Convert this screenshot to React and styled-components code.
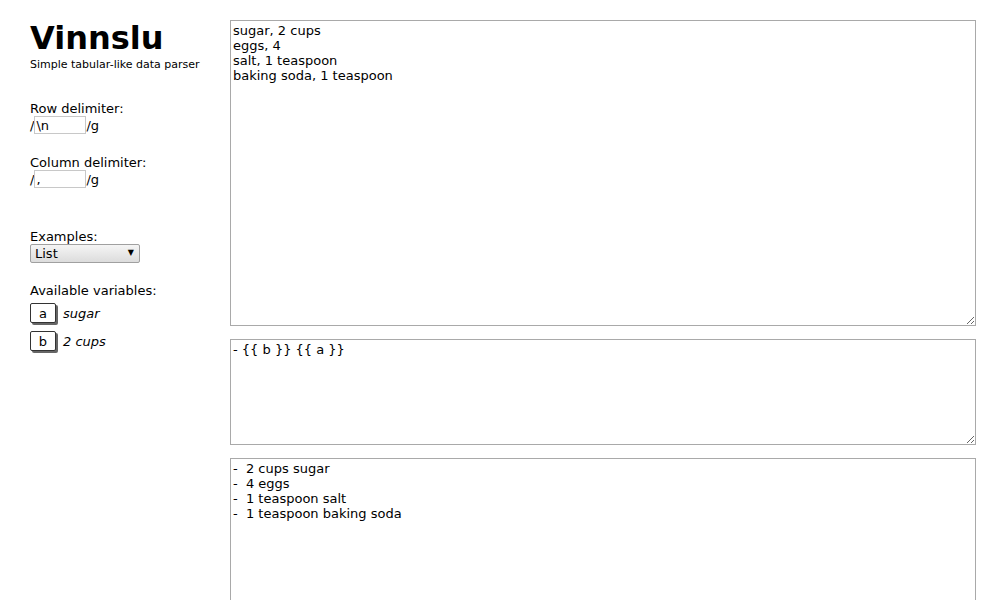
import React, { useState } from "react";
import styled, { createGlobalStyle } from "styled-components";

const GlobalStyle = createGlobalStyle`
  body {
    margin: 0;
    background: #fff;
    color: #000;
    font-family: "DejaVu Sans", Verdana, sans-serif;
    font-size: 13px;
  }
`;

const Page = styled.div`
  display: flex;
  align-items: flex-start;
  padding: 20px 24px 0 30px;
`;

const Sidebar = styled.div`
  width: 200px;
  flex-shrink: 0;
`;

const Title = styled.h1`
  margin: 0;
  font-size: 32px;
  font-weight: bold;
  line-height: 37px;
`;

const Subtitle = styled.div`
  margin-top: 1px;
  font-size: 11px;
  line-height: 13px;
`;

const Field = styled.div`
  margin-top: ${(p) => p.gap}px;
`;

const Label = styled.div`
  line-height: 15px;
`;

const RegexRow = styled.div`
  display: flex;
  align-items: center;
  height: 18px;
  line-height: 15px;
`;

const RegexInput = styled.input`
  width: 52px;
  height: 18px;
  box-sizing: border-box;
  margin: 0;
  padding: 0 1px;
  border: 1px solid #c8c8c8;
  font-family: "DejaVu Sans", sans-serif;
  font-size: 13px;
  outline: none;
`;

const SelectWrap = styled.div`
  position: relative;
  width: 110px;
  height: 19px;
`;

const Select = styled.select`
  appearance: none;
  width: 110px;
  height: 19px;
  box-sizing: border-box;
  margin: 0;
  padding: 0 0 0 4px;
  border: 1px solid #a0a0a0;
  border-radius: 2px;
  background: linear-gradient(#f5f5f5, #dcdcdc);
  font-family: "DejaVu Sans", sans-serif;
  font-size: 13px;
  color: #000;
`;

const Arrow = styled.span`
  position: absolute;
  right: 6px;
  top: 4px;
  font-size: 8px;
  line-height: 10px;
  pointer-events: none;
`;

const VarList = styled.div`
  display: flex;
  flex-direction: column;
  gap: 8px;
  margin-top: 5px;
`;

const VarRow = styled.div`
  display: flex;
  align-items: center;
  gap: 7px;
`;

const VarKey = styled.button`
  width: 26px;
  height: 20px;
  box-sizing: border-box;
  padding: 0;
  margin: 0;
  border: 1px solid #333;
  border-radius: 2px;
  background: #fff;
  box-shadow: 2px 2px 0 #666;
  font-family: "DejaVu Sans", sans-serif;
  font-size: 13px;
  color: #000;
`;

const VarValue = styled.span`
  font-style: italic;
`;

const Main = styled.div`
  flex: 1;
  display: flex;
  flex-direction: column;
  gap: 13px;
`;

const Area = styled.textarea`
  display: block;
  width: 100%;
  height: ${(p) => p.h}px;
  box-sizing: border-box;
  margin: 0;
  padding: 2px;
  border: 1px solid #a9a9a9;
  font-family: "DejaVu Sans", sans-serif;
  font-size: 13px;
  line-height: 15px;
  color: #000;
  outline: none;
`;

const input = "sugar, 2 cups\neggs, 4\nsalt, 1 teaspoon\nbaking soda, 1 teaspoon";

// cells keep their leading spaces, like the regex split does
const parse = (text) => text.split(/\n/g).map((row) => row.split(/,/g));

export default function App() {
  const [data, setData] = useState(input);
  const [template, setTemplate] = useState("- {{ b }} {{ a }}");

  const rows = parse(data);
  const output = rows
    .map((cols) =>
      template.replace(/\{\{\s*(\w)\s*\}\}/g, (m, k) => cols[k.charCodeAt(0) - 97] || "")
    )
    .join("\n");

  return (
    <>
      <GlobalStyle />
      <Page>
        <Sidebar>
          <Title>Vinnslu</Title>
          <Subtitle>Simple tabular-like data parser</Subtitle>

          <Field gap={30}>
            <Label>Row delimiter:</Label>
            <RegexRow>
              /<RegexInput defaultValue="\n" />/g
            </RegexRow>
          </Field>

          <Field gap={21}>
            <Label>Column delimiter:</Label>
            <RegexRow>
              /<RegexInput defaultValue="," />/g
            </RegexRow>
          </Field>

          <Field gap={41}>
            <Label>Examples:</Label>
            <SelectWrap>
              <Select defaultValue="list">
                <option value="list">List</option>
              </Select>
              <Arrow>▼</Arrow>
            </SelectWrap>
          </Field>

          <Field gap={20}>
            <Label>Available variables:</Label>
            <VarList>
              {rows[0].map((v, i) => (
                <VarRow key={i}>
                  <VarKey>{String.fromCharCode(97 + i)}</VarKey>
                  <VarValue>{v.trim()}</VarValue>
                </VarRow>
              ))}
            </VarList>
          </Field>
        </Sidebar>

        <Main>
          <Area h={306} value={data} onChange={(e) => setData(e.target.value)} />
          <Area h={106} value={template} onChange={(e) => setTemplate(e.target.value)} />
          <Area h={306} value={output} readOnly />
        </Main>
      </Page>
    </>
  );
}
